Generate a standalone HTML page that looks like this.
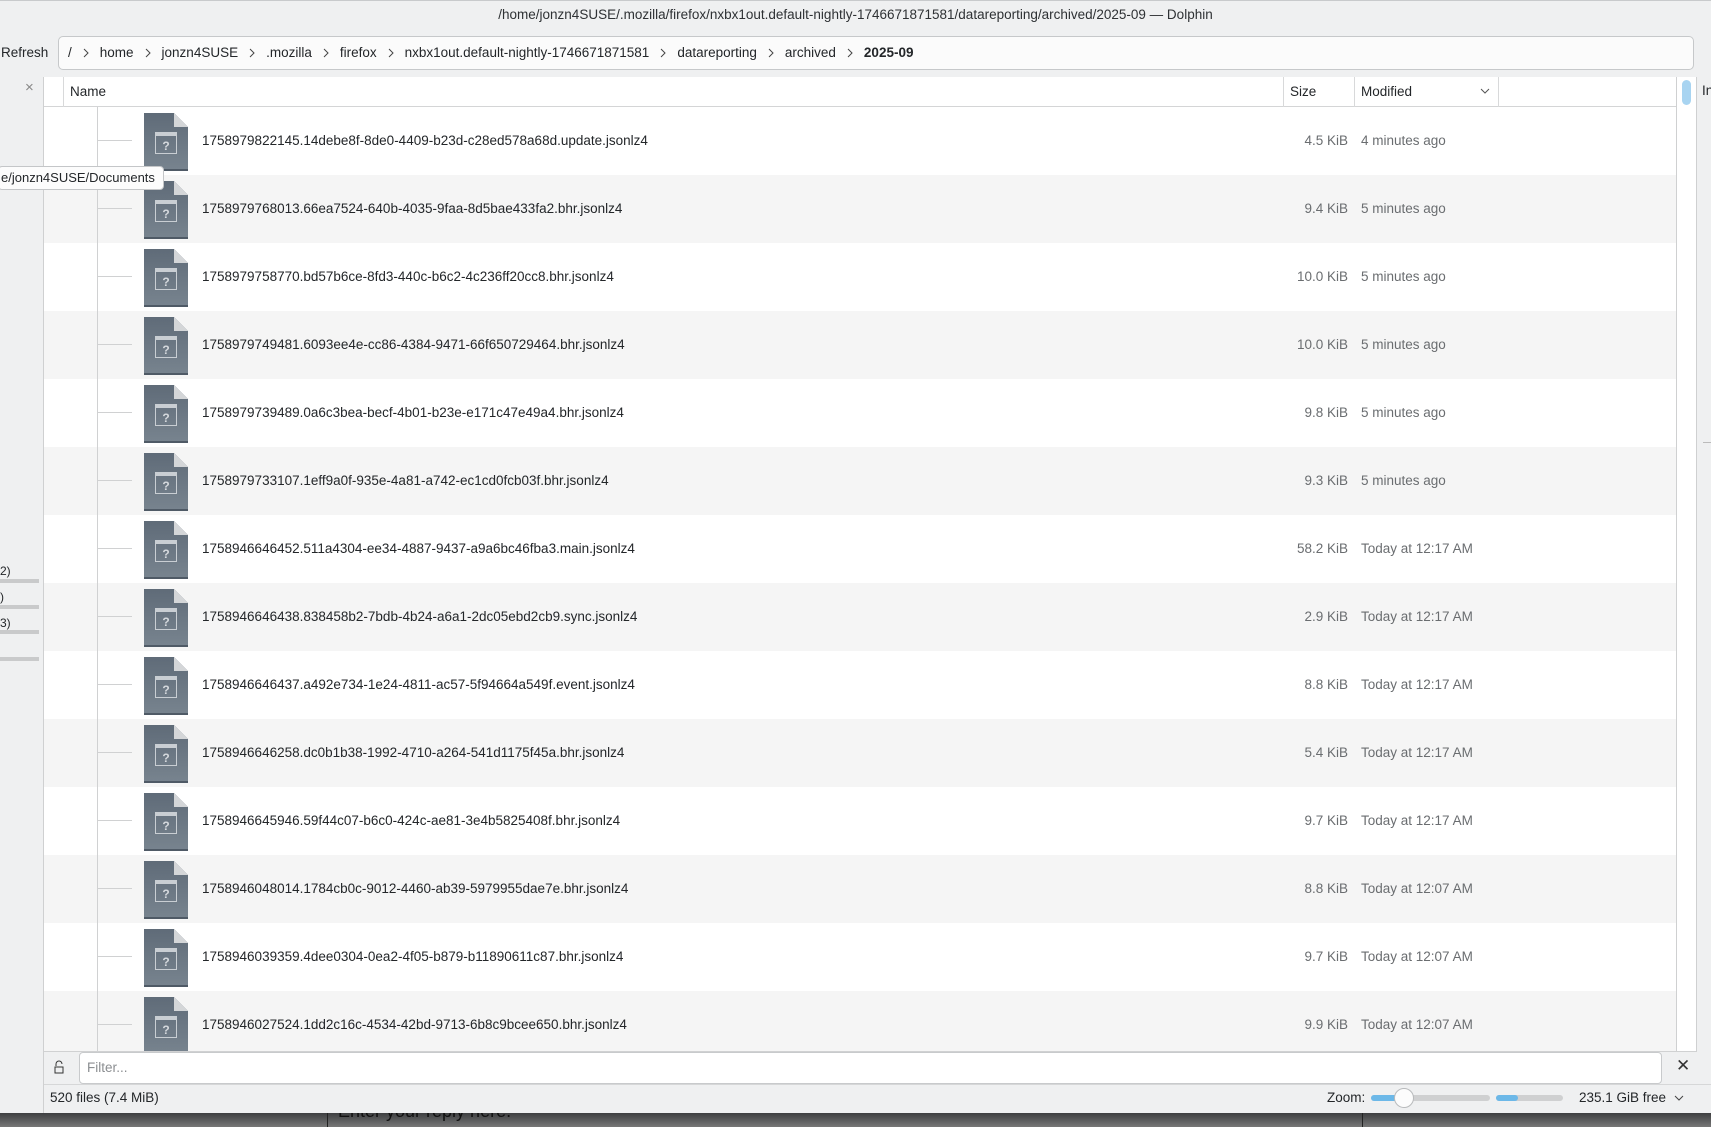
<!DOCTYPE html>
<html><head><meta charset="utf-8"><style>
*{box-sizing:border-box;margin:0;padding:0}
body{width:1711px;height:1127px;overflow:hidden;background:#5a5b5d;font-family:"Liberation Sans",sans-serif;color:#232629;position:relative}
.abs{position:absolute}
#win{left:0;top:0;width:1711px;height:1113px;background:#eff0f1;border-top:1px solid #c8cacc}
.title{left:0;top:0;width:1711px;height:30px;text-align:center;font-size:13.5px;line-height:28px;color:#2e3134}
.crumb{left:58px;top:35px;width:1636px;height:34px;background:#fbfbfb;border:1px solid #c6c8ca;border-radius:5px;font-size:13.5px;line-height:32px;padding-left:9px;white-space:nowrap}
.crumb svg{margin:0 11px;vertical-align:middle}
.refresh{left:1px;top:35px;font-size:13.5px;line-height:34px}
.hdr{left:44px;top:76px;width:1632px;height:30px;background:#fff;border-bottom:1px solid #d4d5d6;font-size:13.5px}
.hdr div{position:absolute;top:0;height:30px;line-height:30px;border-left:1px solid #d8d9da;padding-left:6px}
.rows{left:44px;top:106px;width:1632px;height:945px;overflow:hidden;background:#fff}
.row{position:absolute;left:0;width:1632px;height:68px;font-size:13.5px}
.row.a{background:#f5f5f5}
.row .n{position:absolute;left:158px;top:26px}
.row .sz{position:absolute;right:328px;top:26px;color:#6a6d70}
.row .md{position:absolute;left:1317px;top:26px;color:#6a6d70}
.row .h{position:absolute;left:53px;top:33px;width:35px;height:1px;background:#d0d1d2}
.ic{position:absolute;left:100px;top:6px;width:44px;height:58px}
.vl{left:97px;top:106px;width:1px;height:945px;background:#d0d1d2}
.left{left:0;top:76px;width:44px;height:1037px;background:#eff0f1;border-right:1px solid #cfd0d1}
.tip{left:-2px;top:165px;width:166px;height:24px;background:#fcfcfc;border:1px solid #c4c6c8;border-radius:4px;font-size:13px;line-height:22px;padding-left:2px;white-space:nowrap;overflow:hidden}
.bar{height:4px;width:39px;background:#c9cacb;left:0}
.filter{left:79px;top:1051px;width:1583px;height:32px;background:#fff;border:1px solid #c8cacc;border-radius:4px;font-size:13.5px;line-height:30px;padding-left:7px;color:#8b8e91}
.status{font-size:13.5px}
</style></head><body>
<div id="win" class="abs">
<div class="abs title">/home/jonzn4SUSE/.mozilla/firefox/nxbx1out.default-nightly-1746671871581/datareporting/archived/2025-09 — Dolphin</div>
<div class="abs refresh">Refresh</div>
<div class="abs crumb">/<svg width="6" height="10"><path d="M1 1l4 4-4 4" stroke="#444" fill="none"/></svg>home<svg width="6" height="10"><path d="M1 1l4 4-4 4" stroke="#444" fill="none"/></svg>jonzn4SUSE<svg width="6" height="10"><path d="M1 1l4 4-4 4" stroke="#444" fill="none"/></svg>.mozilla<svg width="6" height="10"><path d="M1 1l4 4-4 4" stroke="#444" fill="none"/></svg>firefox<svg width="6" height="10"><path d="M1 1l4 4-4 4" stroke="#444" fill="none"/></svg>nxbx1out.default-nightly-1746671871581<svg width="6" height="10"><path d="M1 1l4 4-4 4" stroke="#444" fill="none"/></svg>datareporting<svg width="6" height="10"><path d="M1 1l4 4-4 4" stroke="#444" fill="none"/></svg>archived<svg width="6" height="10"><path d="M1 1l4 4-4 4" stroke="#444" fill="none"/></svg><b>2025-09</b></div>

<div class="abs left">
<div class="abs" style="left:25px;top:2px;font-size:15px;color:#888">×</div>
<div class="abs" style="left:0;top:487px;font-size:12px">2)</div>
<div class="abs bar" style="top:502px"></div>
<div class="abs" style="left:0;top:513px;font-size:12px">)</div>
<div class="abs bar" style="top:528px"></div>
<div class="abs" style="left:0;top:539px;font-size:12px">3)</div>
<div class="abs bar" style="top:553px"></div>
<div class="abs bar" style="top:580px"></div>
</div>

<div class="abs hdr">
<div style="left:19px;">Name</div>
<div style="left:1239px;">Size</div>
<div style="left:1310px;width:145px;border-right:1px solid #d8d9da">Modified<svg style="position:absolute;right:8px;top:11px" width="10" height="6"><path d="M1 1l4 4 4-4" stroke="#555" fill="none"/></svg></div>
</div>

<div class="abs rows" id="rows"></div>
<div class="abs vl"></div>
<div class="abs tip">e/jonzn4SUSE/Documents</div>

<div class="abs" style="left:1676px;top:76px;width:21px;height:975px;background:#fff;border-left:1px solid #cfd0d1;border-right:1px solid #cfd0d1"></div>
<div class="abs" style="left:1682px;top:79px;width:9px;height:25px;background:#a8d4f1;border-radius:5px"></div>
<div class="abs" style="left:1702px;top:82px;font-size:13.5px">In</div>
<div class="abs" style="left:1703px;top:441px;width:8px;height:1px;background:#bbb"></div>

<div class="abs" style="left:44px;top:1050px;width:1652px;height:1px;background:#d0d1d2"></div>
<svg class="abs" style="left:53px;top:1059px" width="12" height="14"><path d="M3 6V4a3 3 0 0 1 6 0" stroke="#333" fill="none"/><rect x="2" y="7" width="8" height="6" stroke="#333" fill="none"/></svg>
<div class="abs filter">Filter...</div>
<div class="abs" style="left:1676px;top:1055px;font-size:17px;color:#333">✕</div>
<div class="abs" style="left:44px;top:1083px;width:1667px;height:1px;background:#d6d7d8"></div>
<div class="abs status" style="left:50px;top:1089px">520 files (7.4 MiB)</div>
<div class="abs status" style="left:1327px;top:1089px">Zoom:</div>
<div class="abs" style="left:1371px;top:1094px;width:119px;height:6px;background:#cfd0d1;border-radius:3px"></div>
<div class="abs" style="left:1371px;top:1094px;width:30px;height:6px;background:#6cb8e8;border-radius:3px"></div>
<div class="abs" style="left:1394px;top:1087px;width:20px;height:20px;background:#fcfcfc;border:1px solid #b8babc;border-radius:50%"></div>
<div class="abs" style="left:1496px;top:1094px;width:67px;height:6px;background:#cfd0d1;border-radius:3px"></div>
<div class="abs" style="left:1496px;top:1094px;width:22px;height:6px;background:#6cb8e8;border-radius:3px"></div>
<div class="abs status" style="left:1579px;top:1089px">235.1 GiB free</div>
<svg class="abs" style="left:1674px;top:1094px" width="10" height="6"><path d="M1 1l4 4 4-4" stroke="#444" fill="none"/></svg>
</div>
<div class="abs" style="left:0;top:1113px;width:1711px;height:14px;background:linear-gradient(#3e3f41,#777)"></div>
<div class="abs" style="left:327px;top:1113px;width:1px;height:14px;background:#222"></div>
<div class="abs" style="left:1362px;top:1113px;width:1px;height:14px;background:#222"></div>
<div class="abs" style="left:338px;top:1101px;font-size:18px;color:#111;clip-path:inset(12px 0 0 0)">Enter your reply here.</div>

<script>
var d=[["1758979822145.14debe8f-8de0-4409-b23d-c28ed578a68d.update.jsonlz4","4.5 KiB","4 minutes ago"],
["1758979768013.66ea7524-640b-4035-9faa-8d5bae433fa2.bhr.jsonlz4","9.4 KiB","5 minutes ago"],
["1758979758770.bd57b6ce-8fd3-440c-b6c2-4c236ff20cc8.bhr.jsonlz4","10.0 KiB","5 minutes ago"],
["1758979749481.6093ee4e-cc86-4384-9471-66f650729464.bhr.jsonlz4","10.0 KiB","5 minutes ago"],
["1758979739489.0a6c3bea-becf-4b01-b23e-e171c47e49a4.bhr.jsonlz4","9.8 KiB","5 minutes ago"],
["1758979733107.1eff9a0f-935e-4a81-a742-ec1cd0fcb03f.bhr.jsonlz4","9.3 KiB","5 minutes ago"],
["1758946646452.511a4304-ee34-4887-9437-a9a6bc46fba3.main.jsonlz4","58.2 KiB","Today at 12:17 AM"],
["1758946646438.838458b2-7bdb-4b24-a6a1-2dc05ebd2cb9.sync.jsonlz4","2.9 KiB","Today at 12:17 AM"],
["1758946646437.a492e734-1e24-4811-ac57-5f94664a549f.event.jsonlz4","8.8 KiB","Today at 12:17 AM"],
["1758946646258.dc0b1b38-1992-4710-a264-541d1175f45a.bhr.jsonlz4","5.4 KiB","Today at 12:17 AM"],
["1758946645946.59f44c07-b6c0-424c-ae81-3e4b5825408f.bhr.jsonlz4","9.7 KiB","Today at 12:17 AM"],
["1758946048014.1784cb0c-9012-4460-ab39-5979955dae7e.bhr.jsonlz4","8.8 KiB","Today at 12:07 AM"],
["1758946039359.4dee0304-0ea2-4f05-b879-b11890611c87.bhr.jsonlz4","9.7 KiB","Today at 12:07 AM"],
["1758946027524.1dd2c16c-4534-42bd-9713-6b8c9bcee650.bhr.jsonlz4","9.9 KiB","Today at 12:07 AM"]];
var ic='<svg class="ic" viewBox="0 0 44 58"><defs><linearGradient id="g" x1="0" y1="0" x2="0" y2="1"><stop offset="0" stop-color="#5f6b78"/><stop offset="1" stop-color="#78848f"/></linearGradient></defs><path d="M0 0H30L44 14V58H0Z" fill="url(#g)"/><path d="M30 0L44 14H30Z" fill="#d4d6d8"/><rect x="0" y="56" width="44" height="2" fill="#4f5a66"/><rect x="11.5" y="19.5" width="21" height="21" fill="none" stroke="#c9ced3"/><rect x="12" y="20" width="20" height="3" fill="#c9ced3"/><text x="22" y="37" font-size="12" font-weight="bold" text-anchor="middle" fill="#d5d9dd" font-family="Liberation Sans">?</text></svg>';
var h='';d.forEach(function(r,i){h+='<div class="row'+(i%2?' a':'')+'" style="top:'+(i*68)+'px"><div class="h"></div>'+ic+'<div class="n">'+r[0]+'</div><div class="sz">'+r[1]+'</div><div class="md">'+r[2]+'</div></div>';});
document.getElementById('rows').innerHTML=h;
</script>
</body></html>
